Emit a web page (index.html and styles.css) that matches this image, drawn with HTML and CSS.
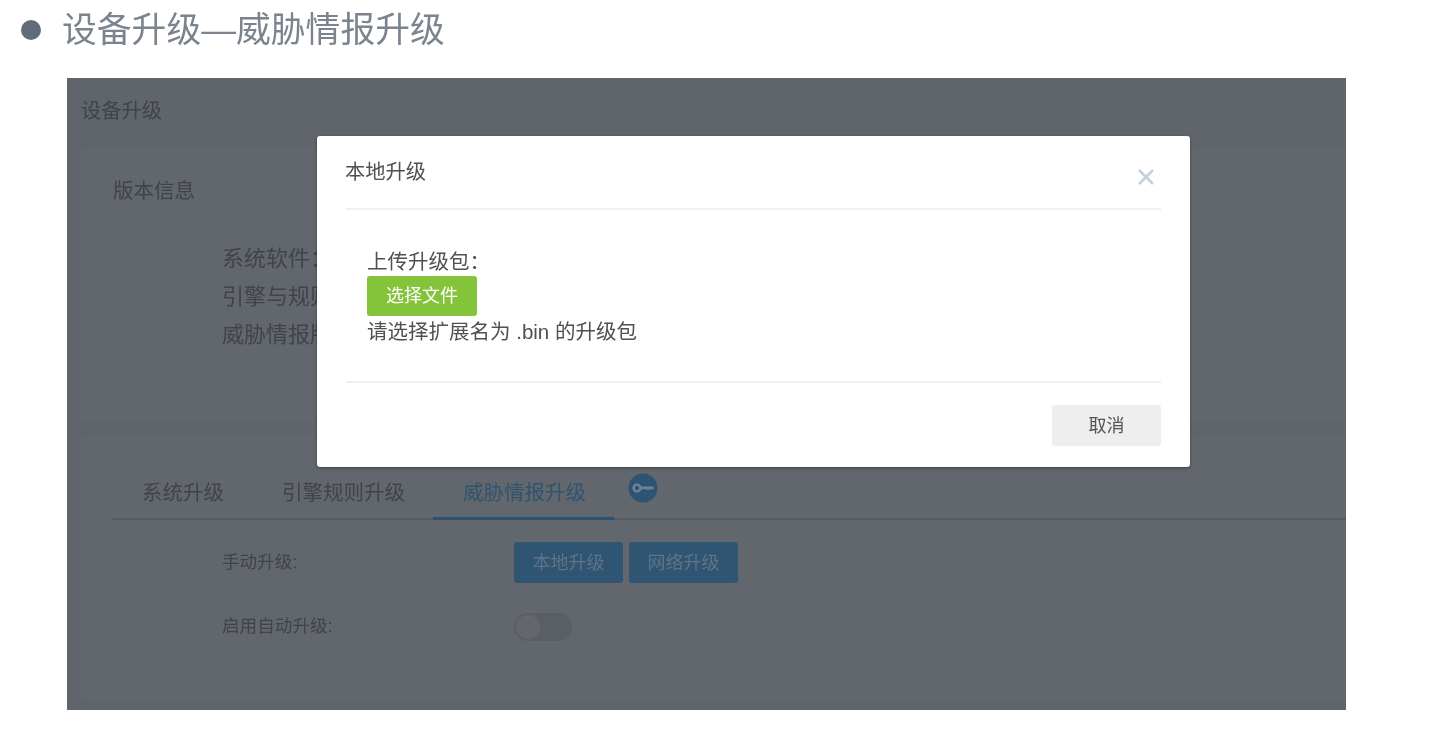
FILE: index.html
```html
<!DOCTYPE html>
<html lang="zh-CN">
<head>
    <meta charset="UTF-8">
    <title>设备升级—威胁情报升级</title>
    <link rel="stylesheet" href="styles.css">
</head>

<body>
    <div class="slide-title">
        <span class="dot"></span>
        <span class="slide-text">设备升级—威胁情报升级</span>
    </div>

    <div class="shot">
        <div class="page-title">设备升级</div>

        <div class="card version-card">
            <div class="card-title">版本信息</div>
            <div class="version-list">
                <div>系统软件：</div>
                <div>引擎与规则</div>
                <div>威胁情报版</div>
            </div>
        </div>

        <div class="card upgrade-card">
            <div class="tabs">
                <div class="tab">系统升级</div>
                <div class="tab">引擎规则升级</div>
                <div class="tab active">威胁情报升级</div>
                <svg class="key-icon" viewBox="0 0 30 30">
                    <circle cx="15" cy="15" r="14.5" fill="#2d5573"/>
                    <circle cx="9" cy="15" r="3.4" fill="none" stroke="#708294" stroke-width="2.4"/>
                    <path d="M12 13.6h13.5v2.6h-3.5l-1 1-1-1-1 1-1-1h-6z" fill="#708294"/>
                </svg>
            </div>
            <div class="form-row manual-row">
                <div class="form-label">手动升级:</div>
                <button class="blue-btn">本地升级</button>
                <button class="blue-btn">网络升级</button>
            </div>
            <div class="form-row auto-row">
                <div class="form-label">启用自动升级:</div>
                <div class="toggle"><span class="knob"></span></div>
            </div>
        </div>

        <div class="modal">
            <div class="modal-head">
                <span class="modal-title">本地升级</span>
                <svg class="close-icon" viewBox="0 0 18 18">
                    <path d="M2 2l14 14M16 2L2 16" stroke="#c6d0dd" stroke-width="2.6" fill="none"/>
                </svg>
            </div>
            <div class="modal-body">
                <div class="upload-label">上传升级包：</div>
                <button class="green-btn">选择文件</button>
                <div class="upload-tip">请选择扩展名为 .bin 的升级包</div>
            </div>
            <div class="modal-foot">
                <button class="cancel-btn">取消</button>
            </div>
        </div>
    </div>
</body>
</html>
```

FILE: styles.css
```css
*,*::before,*::after{
    box-sizing: border-box;
}

body{
    margin: 0;
    width: 1438px;
    height: 741px;
    overflow: hidden;
    background-color: #fff;
    font-family: "Liberation Sans", "Noto Sans CJK SC", sans-serif;
}

/* the reference is a scaled up screenshot, so everything is a bit soft */
.slide-title, .shot{
    filter: blur(0.5px);
}

.slide-title{
    display: flex;
    align-items: center;
    height: 60px;
    padding-left: 21px;
}

.dot{
    width: 20px;
    height: 20px;
    border-radius: 50%;
    background-color: #636c7a;
}

.slide-text{
    margin-left: 21px;
    font-size: 34.8px;
    line-height: 60px;
    color: #7b848e;
}

.shot{
    position: relative;
    width: 1279px;
    height: 632px;
    margin: 18px 0 0 67px;
    overflow: hidden;
    background-color: #5f656b;
    color: #404449;
}

.page-title{
    height: 70px;
    padding-left: 14px;
    font-size: 20.3px;
    line-height: 67px;
}

.card{
    margin-left: 14px;
    background-color: #62676d;
}

.version-card{
    height: 273px;
    padding: 30px 0 0 32px;
}

.card-title{
    font-size: 20.5px;
    line-height: 26px;
}

.version-list{
    margin: 36px 0 0 109px;
    font-size: 22px;
    line-height: 38px;
}

.upgrade-card{
    height: 264px;
    margin-top: 15px;
    padding: 33px 0 0 31px;
}

.tabs{
    display: flex;
    height: 51px;
    border-bottom: 2px solid #575b62;
}

.tab{
    height: 51px;
    padding: 0 28px 0 30px;
    font-size: 20.5px;
    line-height: 48px;
}

.tab.active{
    color: #30536f;
    border-bottom: 3px solid #2b5273;
}

.key-icon{
    width: 30px;
    height: 30px;
    margin: 4px 0 0 14px;
}

.form-row{
    display: flex;
    align-items: center;
}

.manual-row{
    margin-top: 22px;
    padding-left: 110px;
}

.auto-row{
    margin-top: 29px;
    padding-left: 110px;
}

.form-label{
    width: 292px;
    padding-bottom: 4px;
    font-size: 17.6px;
}

.blue-btn{
    width: 109px;
    height: 41px;
    margin-right: 6px;
    padding: 0 0 4px;
    border: none;
    border-radius: 3px;
    background-color: #2f5572;
    color: #5f7488;
    font-family: inherit;
    font-size: 18px;
}

.toggle{
    width: 58px;
    height: 28px;
    padding: 2px;
    border-radius: 14px;
    background-color: #5a5f64;
}

.knob{
    display: block;
    width: 24px;
    height: 24px;
    border-radius: 50%;
    background-color: #63676d;
}

.modal{
    position: absolute;
    left: 250px;
    top: 58px;
    width: 873px;
    height: 331px;
    padding: 0 29px;
    border-radius: 3px;
    background-color: #fff;
    box-shadow: 0 1px 3px rgba(0,0,0,0.4);
    color: #505050;
}

.modal-head{
    display: flex;
    justify-content: space-between;
    height: 74px;
    border-bottom: 2px solid #f0f0f0;
    font-size: 20.3px;
    line-height: 72px;
}

.modal-title{
    margin-left: -1px;
}

.close-icon{
    width: 18px;
    height: 18px;
    margin: 32px 6px 0 0;
}

.modal-body{
    height: 173px;
    padding: 38px 0 0 21px;
    border-bottom: 2px solid #f0f0f0;
}

.upload-label{
    font-size: 20.5px;
    line-height: 28px;
}

.green-btn{
    display: block;
    width: 110px;
    height: 40px;
    padding: 0 0 4px;
    border: none;
    border-radius: 3px;
    background-color: #84c43a;
    color: #fff;
    font-family: inherit;
    font-size: 18px;
}

.upload-tip{
    font-size: 20.5px;
    line-height: 32px;
}

.modal-foot{
    display: flex;
    justify-content: flex-end;
    padding-top: 22px;
}

.cancel-btn{
    width: 109px;
    height: 41px;
    padding: 0 0 4px;
    border: none;
    border-radius: 3px;
    background-color: #eeeeee;
    color: #555;
    font-family: inherit;
    font-size: 18px;
}
```
